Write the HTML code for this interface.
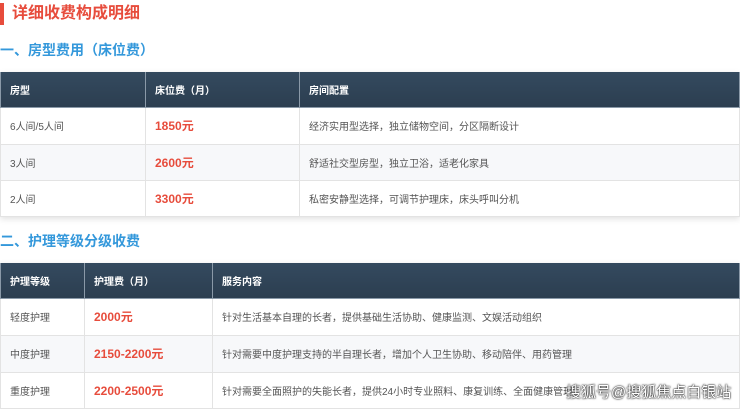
<!DOCTYPE html>
<html><head><meta charset="utf-8"><style>
*{margin:0;padding:0;box-sizing:border-box}
body{width:740px;height:409px;background:#fff;font-family:"Liberation Sans","Noto Sans CJK SC",sans-serif;position:relative;overflow:hidden}
.title{position:absolute;left:0;top:3px;height:22px;border-left:4px solid #e74c3c;padding-left:8px;color:#e74c3c;font-size:16px;font-weight:bold;line-height:22px}
.h2{position:absolute;left:0;color:#3498db;font-size:14px;font-weight:bold;line-height:20px}
table{position:absolute;left:0;width:740px;border-collapse:collapse;font-size:10px;color:#555;box-shadow:0 2px 6px rgba(0,0,0,0.12)}
th{background:linear-gradient(#344a5f,#2c3e50);color:#fff;text-align:left;font-weight:bold;padding-left:9px;border:1px solid #8a99a8;border-top:none}
td{padding-left:9px;border:1px solid #e3e3e3}
tr.alt td{background:#f7f8fa}
.p{color:#e74c3c;font-weight:bold;font-size:12px}
.wm{position:absolute;left:566px;top:381px;color:#fff;font-size:15px;text-shadow:0 0 2px #000,0 0 1px #000;letter-spacing:0}
</style></head><body>
<div class="title">详细收费构成明细</div>
<div class="h2" style="top:40px">一、房型费用（床位费）</div>
<table style="top:72px">
<tr style="height:35px"><th style="width:145px">房型</th><th style="width:154px">床位费（月）</th><th>房间配置</th></tr>
<tr style="height:37px"><td>6人间/5人间</td><td class="p">1850元</td><td>经济实用型选择，独立储物空间，分区隔断设计</td></tr>
<tr class="alt" style="height:36px"><td>3人间</td><td class="p">2600元</td><td>舒适社交型房型，独立卫浴，适老化家具</td></tr>
<tr style="height:36px"><td>2人间</td><td class="p">3300元</td><td>私密安静型选择，可调节护理床，床头呼叫分机</td></tr>
</table>
<div class="h2" style="top:231px">二、护理等级分级收费</div>
<table style="top:263px">
<tr style="height:35px"><th style="width:84px">护理等级</th><th style="width:128px">护理费（月）</th><th>服务内容</th></tr>
<tr style="height:37px"><td>轻度护理</td><td class="p">2000元</td><td>针对生活基本自理的长者，提供基础生活协助、健康监测、文娱活动组织</td></tr>
<tr class="alt" style="height:37px"><td>中度护理</td><td class="p">2150-2200元</td><td>针对需要中度护理支持的半自理长者，增加个人卫生协助、移动陪伴、用药管理</td></tr>
<tr style="height:36px"><td>重度护理</td><td class="p">2200-2500元</td><td>针对需要全面照护的失能长者，提供24小时专业照料、康复训练、全面健康管理</td></tr>
</table>
<div class="wm">搜狐号@搜狐焦点白银站</div>
</body></html>
